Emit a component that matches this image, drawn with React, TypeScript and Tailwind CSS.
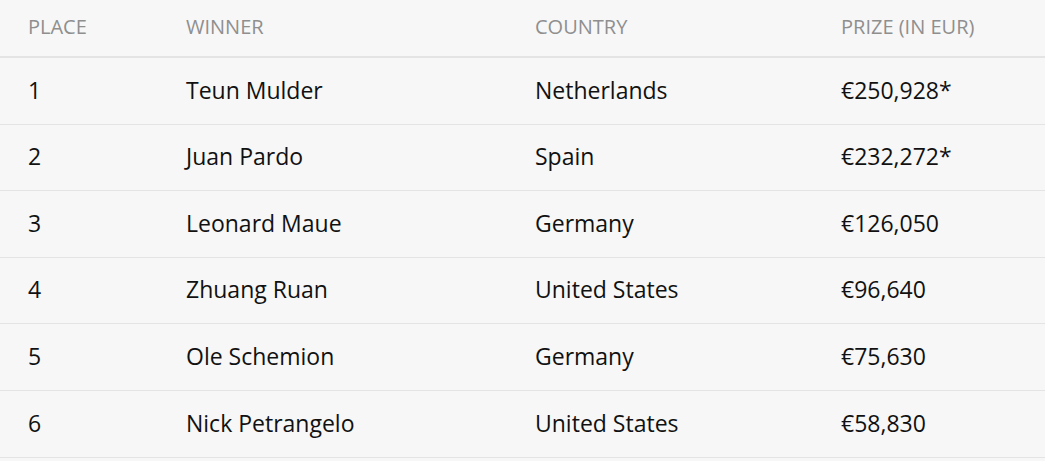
const rows = [
  { place: "1", winner: "Teun Mulder", country: "Netherlands", prize: "€250,928*" },
  { place: "2", winner: "Juan Pardo", country: "Spain", prize: "€232,272*" },
  { place: "3", winner: "Leonard Maue", country: "Germany", prize: "€126,050" },
  { place: "4", winner: "Zhuang Ruan", country: "United States", prize: "€96,640" },
  { place: "5", winner: "Ole Schemion", country: "Germany", prize: "€75,630" },
  { place: "6", winner: "Nick Petrangelo", country: "United States", prize: "€58,830" },
];

export default function App() {
  return (
    <div className="w-[1045px] h-[461px] bg-[#f7f7f7] font-['Open_Sans',sans-serif] overflow-hidden">
      <div className="grid grid-cols-[186px_349px_306px_1fr] items-center h-[58px] pb-[3px] border-b-2 border-[#e4e4e4] text-[20px] text-[#8f8f8f] uppercase">
        <div className="pl-[28px]">Place</div>
        <div>Winner</div>
        <div>Country</div>
        <div>Prize (in EUR)</div>
      </div>
      {rows.map((row) => (
        <div
          key={row.place}
          className="grid grid-cols-[186px_349px_306px_1fr] items-center h-[66.6px] pb-[2px] border-b border-[#e4e4e4] text-[23px] text-[#111111]"
        >
          <div className="pl-[28px]">{row.place}</div>
          <div>{row.winner}</div>
          <div>{row.country}</div>
          <div>{row.prize}</div>
        </div>
      ))}
    </div>
  );
}
